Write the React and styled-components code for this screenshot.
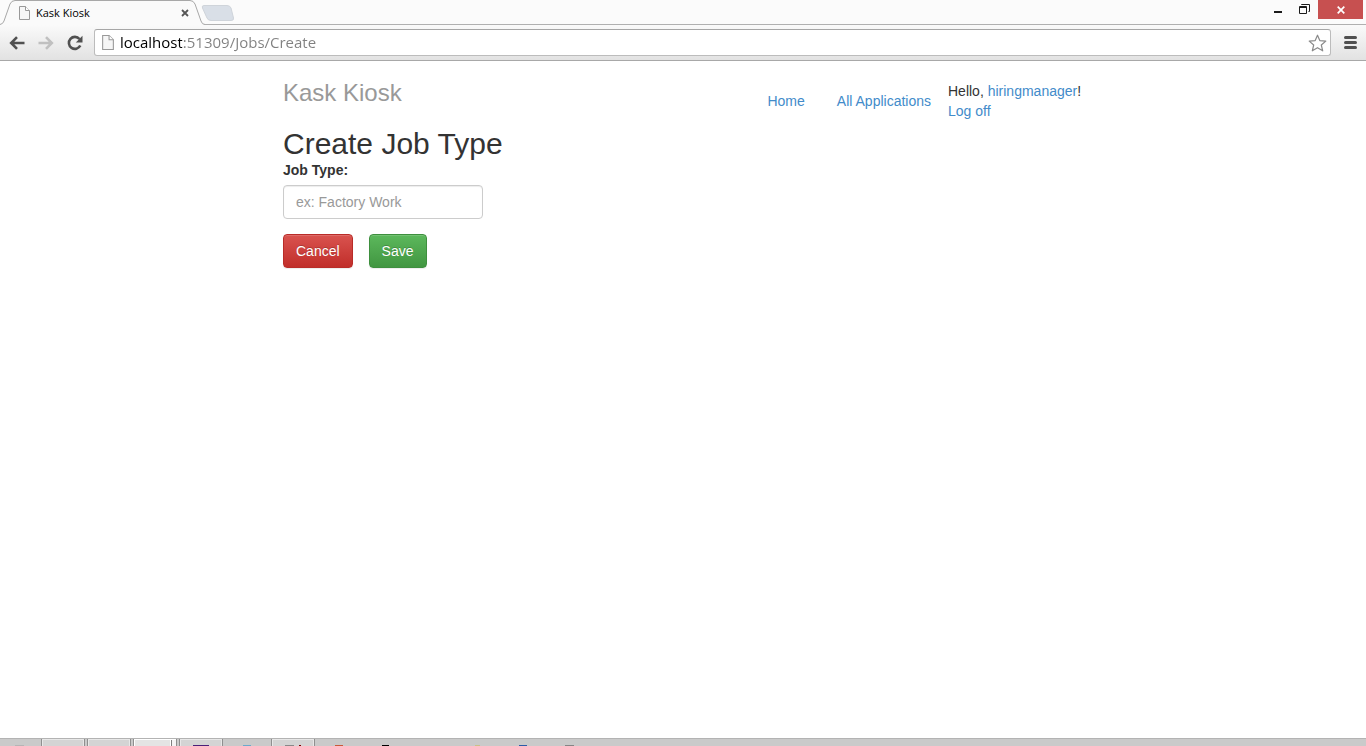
import React from "react";
import styled, { createGlobalStyle } from "styled-components";

const GlobalStyle = createGlobalStyle`
  *, *::before, *::after { box-sizing: border-box; }
  html, body, #root { height: 100%; }
  body {
    margin: 0;
    background: #fff;
    color: #333;
    font-family: "Liberation Sans", Arial, sans-serif;
    font-size: 14px;
    line-height: 20px;
  }
`;

const uiFont = `"Open Sans", "Noto Sans", sans-serif`;

const Window = styled.div`
  display: flex;
  flex-direction: column;
  min-height: 100%;
`;

const TabStrip = styled.header`
  display: flex;
  height: 25px;
  background: #fbfbfb;
  border-bottom: 1px solid #b0b0b0;
  font-family: ${uiFont};
`;

const Tab = styled.div`
  position: relative;
  display: flex;
  align-items: center;
  gap: 6px;
  width: 204px;
  height: 25px;
  padding: 0 14px 0 19px;
  color: #000;
  font-size: 11px;
  line-height: 16px;
`;

const TabShape = styled.svg`
  position: absolute;
  inset: 0;
`;

const TabTitle = styled.span`
  position: relative;
  flex: 1;
`;

const IconButton = styled.button`
  position: relative;
  display: flex;
  align-items: center;
  justify-content: center;
  width: ${(p) => p.$width}px;
  height: ${(p) => p.$height}px;
  padding: 0;
  border: 0;
  background: ${(p) => p.$background || "transparent"};
`;

const PageGlyph = styled.svg`
  position: relative;
  flex: none;
`;

const WindowControls = styled.div`
  display: flex;
  margin-left: auto;
  padding-right: 3px;
`;

const Toolbar = styled.nav`
  display: flex;
  align-items: center;
  height: 36px;
  padding: 0 3px 0 2px;
  background: linear-gradient(#fafafa, #e2e2e2);
  border-bottom: 1px solid #a8a8a8;
`;

const AddressBar = styled.label`
  display: flex;
  flex: 1;
  align-items: center;
  gap: 6px;
  height: 27px;
  margin: 0 7px 0 5px;
  padding: 0 3px 0 7px;
  background: #fff;
  border: 1px solid #bcbcbc;
  border-top-color: #a6a6a6;
  border-radius: 3px;
`;

/* The host is drawn darker than the rest of the address. */
const AddressInput = styled.input`
  flex: 1;
  min-width: 0;
  height: 25px;
  padding: 0 0 2px;
  border: 0;
  outline: 0;
  color: #808080;
  background: linear-gradient(90deg, #000 62px, #808080 62px);
  background-clip: text;
  -webkit-text-fill-color: transparent;
  font-family: ${uiFont};
  font-size: 15px;
`;

const Page = styled.main`
  flex: 1;
  width: 100%;
  max-width: 800px;
  margin: 0 auto;
  padding-top: 20px;
`;

const PageHeader = styled.header`
  display: flex;
  align-items: flex-start;
  height: 47px;
`;

const Brand = styled.h3`
  flex: 1;
  margin: 0;
  color: #999;
  font-size: 24px;
  font-weight: 400;
  line-height: 24px;
`;

const Nav = styled.nav`
  display: flex;
  gap: 32px;
  padding: 10px 17px 0 0;
`;

const Link = styled.a`
  color: #428bca;
  text-decoration: none;
`;

const Account = styled.div`
  display: flex;
  flex-direction: column;
  min-width: 135px;
`;

const Title = styled.h2`
  margin: 0;
  font-size: 30px;
  font-weight: 400;
  line-height: 32px;
`;

const Form = styled.form`
  display: flex;
  flex-direction: column;
  align-items: flex-start;
`;

const FieldLabel = styled.label`
  margin-bottom: 5px;
  font-weight: 700;
`;

const TextInput = styled.input`
  width: 200px;
  height: 34px;
  padding: 6px 12px;
  color: #555;
  font: inherit;
  border: 1px solid #ccc;
  border-radius: 4px;
  box-shadow: inset 0 1px 1px rgba(0, 0, 0, 0.075);
  &::placeholder { color: #999; opacity: 1; }
`;

const Actions = styled.div`
  display: flex;
  gap: 16px;
  margin-top: 15px;
`;

const tones = {
  danger: { top: "#d9534f", bottom: "#c12e2a", border: "#b92c28" },
  success: { top: "#5cb85c", bottom: "#419641", border: "#3e8f3e" },
};

const Button = styled.button`
  height: 34px;
  padding: 0 12px;
  color: #fff;
  font: inherit;
  background: linear-gradient(${(p) => tones[p.$tone].top}, ${(p) => tones[p.$tone].bottom});
  border: 1px solid ${(p) => tones[p.$tone].border};
  border-radius: 4px;
  text-shadow: 0 -1px 0 rgba(0, 0, 0, 0.2);
  box-shadow: inset 0 1px 0 rgba(255, 255, 255, 0.15), 0 1px 1px rgba(0, 0, 0, 0.075);
`;

const Taskbar = styled.footer`
  display: flex;
  gap: 2px;
  height: 8px;
  overflow: hidden;
  background: #cacaca;
  border-top: 1px solid #b3b3b3;
`;

const TaskItem = styled.div`
  display: flex;
  justify-content: center;
  width: ${(p) => (p.$first ? 39 : 44)}px;
  height: 12px;
  padding-top: 6px;
  background: ${(p) => (p.$state === "active" ? "#e4e4e4" : p.$state ? "#d4d4d4" : "transparent")};
  border: ${(p) => (p.$state ? "1px solid #8f8f8f" : "0")};
  border-top: 0;
  box-shadow: ${(p) =>
    p.$state === "active"
      ? "inset 0 1px 0 #fff, inset 1px 0 0 #fff, inset -4px 0 0 #f4f4f4, inset -5px 0 0 #808080, inset -6px 0 0 #fff"
      : p.$state
        ? "inset 0 0 0 1px #e8e8e8"
        : "none"};
`;

const TaskIcon = styled.span`
  width: ${(p) => p.$size}px;
  height: 4px;
  background: ${(p) => p.$color};
`;

const tasks = [
  { size: 9, color: "#b5b5b5" },
  { state: "open" },
  { state: "open" },
  { state: "active" },
  { state: "open", size: 16, color: "#4b1f78" },
  { size: 8, color: "#6ba9cc" },
  { state: "open", size: 16, color: "linear-gradient(90deg, #888 9px, #d4d4d4 9px 14px, #7c0000 14px)" },
  { size: 8, color: "#c9593a" },
  { size: 7, color: "#000" },
  {},
  { size: 5, color: "#c9c188" },
  { size: 8, color: "#2c5ba8" },
  { size: 9, color: "#858585" },
];

function PageIcon({ width, height }) {
  return (
    <PageGlyph width={width} height={height} viewBox="0 0 11 14" aria-hidden="true">
      <path d="M.5 .5H6.5L10.500 4.500V13.500H.5Z" fill="#f6f6f6" stroke="#999" />
      <path d="M6.500 .5V4.500H10.500" fill="#fff" stroke="#999" />
    </PageGlyph>
  );
}

export default function App() {
  return (
    <Window>
      <GlobalStyle />
      <TabStrip>
        <Tab>
          <TabShape width="240" height="25" viewBox="0 0 240 25" overflow="visible" aria-hidden="true">
            <path d="M204 5.500H227Q230 5.500 231 8L233.500 18Q234 20.500 231 20.500H211Q208 20.500 207 18L202.500 8Q201.500 5.500 204 5.500Z" fill="#d9dfe7" stroke="#cfd4da" />
            <path d="M0 25V24.500Q3 24 4 21L10 4Q11.500 .5 15 .5H190Q193.500 .5 195 4L201 21Q202 24.500 205 24.500V25Z" fill="#fafafa" />
            <path d="M0 24.500Q3 24 4 21L10 4Q11.500 .5 15 .5H190Q193.500 .5 195 4L201 21Q202 24.500 205 24.500" fill="none" stroke="#a8a8a8" />
          </TabShape>
          <PageIcon width="11" height="14" />
          <TabTitle>Kask Kiosk</TabTitle>
          <IconButton $width={10} $height={16} aria-label="Close tab">
            <svg width="8" height="8" viewBox="0 0 8 8">
              <path d="M1 1L7 7M7 1L1 7" stroke="#555" strokeWidth="1.8" />
            </svg>
          </IconButton>
        </Tab>
        <WindowControls>
          <IconButton $width={26} $height={19} aria-label="Minimize">
            <svg width="10" height="12" viewBox="0 0 10 12">
              <path d="M1 8H9" stroke="#1b1b1b" strokeWidth="2" />
            </svg>
          </IconButton>
          <IconButton $width={27} $height={19} aria-label="Restore">
            <svg width="11" height="11" viewBox="0 0 11 11" fill="none" stroke="#1b1b1b">
              <path d="M2.500 1V.5H10.500V7.500H9.500" />
              <path d="M.5 2.500H7.500V9.500H.5ZM1 3.500H7" />
            </svg>
          </IconButton>
          <IconButton $width={45} $height={19} $background="#c75050" aria-label="Close window">
            <svg width="8" height="8" viewBox="0 0 8 8">
              <path d="M.7 .7L7.300 7.300M7.300 .7L.7 7.300" stroke="#fff" strokeWidth="1.700" />
            </svg>
          </IconButton>
        </WindowControls>
      </TabStrip>
      <Toolbar>
        <IconButton $width={29} $height={28} aria-label="Back">
          <svg width="16" height="14" viewBox="0 0 16 14" fill="none" stroke="#505050" strokeWidth="2.600">
            <path d="M8 1.200L2.200 7L8 12.800M2.500 7H15.500" />
          </svg>
        </IconButton>
        <IconButton $width={29} $height={28} aria-label="Forward">
          <svg width="16" height="14" viewBox="0 0 16 14" fill="none" stroke="#c0c0c0" strokeWidth="2.600">
            <path d="M8 1.200L13.800 7L8 12.800M13.500 7H.5" />
          </svg>
        </IconButton>
        <IconButton $width={29} $height={28} aria-label="Reload">
          <svg width="16" height="16" viewBox="0 0 16 16">
            <path d="M12.500 4A6 6 0 1 0 13.300 10.500" fill="none" stroke="#505050" strokeWidth="2.600" />
            <path d="M15.500 .8V7.500H8.800Z" fill="#505050" />
          </svg>
        </IconButton>
        <AddressBar>
          <PageIcon width="12" height="15" />
          <AddressInput aria-label="Address" defaultValue="localhost:51309/Jobs/Create" />
          <svg width="19" height="18" viewBox="0 0 19 18" aria-hidden="true">
            <path d="M9.500 1.200L11.800 6.600L17.800 7.100L13.300 11L14.700 16.800L9.500 13.700L4.300 16.800L5.700 11L1.200 7.100L7.200 6.600Z" fill="#fff" stroke="#8a8a8a" strokeWidth="1.200" strokeLinejoin="round" />
          </svg>
        </AddressBar>
        <IconButton $width={25} $height={28} aria-label="Menu">
          <svg width="13" height="13" viewBox="0 0 13 13">
            <path d="M1.500 1.500H11.500M1.500 6.500H11.500M1.500 11.500H11.500" stroke="#505050" strokeWidth="3" strokeLinecap="round" />
          </svg>
        </IconButton>
      </Toolbar>
      <Page>
        <PageHeader>
          <Brand>Kask Kiosk</Brand>
          <Nav>
            <Link href="#home">Home</Link>
            <Link href="#applications">All Applications</Link>
          </Nav>
          <Account>
            <span>
              Hello, <Link href="#account">hiringmanager</Link>!
            </span>
            <Link href="#logoff">Log off</Link>
          </Account>
        </PageHeader>
        <Title>Create Job Type</Title>
        <Form>
          <FieldLabel htmlFor="job-type">Job Type:</FieldLabel>
          <TextInput id="job-type" type="text" placeholder="ex: Factory Work" />
          <Actions>
            <Button type="button" $tone="danger">Cancel</Button>
            <Button type="button" $tone="success">Save</Button>
          </Actions>
        </Form>
      </Page>
      <Taskbar>
        {tasks.map((task, i) => (
          <TaskItem key={i} $first={i === 0} $state={task.state}>
            {task.size && <TaskIcon $size={task.size} $color={task.color} />}
          </TaskItem>
        ))}
      </Taskbar>
    </Window>
  );
}
